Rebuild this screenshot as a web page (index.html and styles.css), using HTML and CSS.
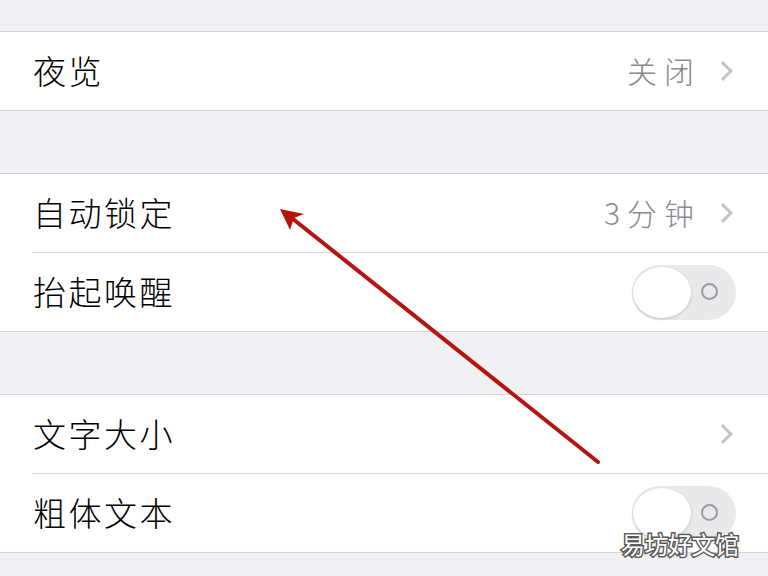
FILE: index.html
```html
<!DOCTYPE html>
<html lang="zh-CN">
<head>
  <meta charset="UTF-8">
  <title>显示与亮度</title>
  <link rel="stylesheet" href="styles.css">
</head>
<body>
  <div class="screen">
    <!-- Night Shift -->
    <div class="group">
      <div class="row">
        <span class="label">夜览</span>
        <span class="value">关闭</span>
        <span class="chevron"></span>
      </div>
    </div>

    <!-- Lock -->
    <div class="group">
      <div class="row">
        <span class="label">自动锁定</span>
        <span class="value">3分钟</span>
        <span class="chevron"></span>
      </div>
      <div class="row">
        <span class="label">抬起唤醒</span>
        <span class="toggle"><span class="knob"></span><span class="off-mark"></span></span>
      </div>
    </div>

    <!-- Text -->
    <div class="group">
      <div class="row">
        <span class="label">文字大小</span>
        <span class="chevron"></span>
      </div>
      <div class="row">
        <span class="label">粗体文本</span>
        <span class="toggle"><span class="knob"></span><span class="off-mark"></span></span>
      </div>
    </div>

    <!-- Annotation arrow -->
    <svg class="arrow" width="768" height="576" viewBox="0 0 768 576">
      <line x1="598" y1="462" x2="288" y2="215" stroke="#b3160e" stroke-width="4" stroke-linecap="round"/>
      <path d="M280 209 L304 214 L294 218 L290 230 Z" fill="#b3160e"/>
    </svg>

    <div class="watermark">易坊好文馆</div>
  </div>
</body>
</html>
```

FILE: styles.css
```css
body {
  margin: 0;
  background-color: #f1f1f5;
  font-family: "Noto Sans CJK SC", "Noto Sans", sans-serif;
}

.screen {
  position: relative;
  width: 768px;
  height: 576px;
  overflow: hidden;
  padding-top: 31px;
  box-sizing: border-box;
}

.group {
  background-color: #ffffff;
  border-top: 1px solid #d4d4d8;
  border-bottom: 1px solid #d4d4d8;
  margin-bottom: 62px;
}

.row {
  display: flex;
  align-items: center;
  height: 78px;
  margin-left: 32px;
  padding-left: 1px;
  padding-right: 34px;
}

.row + .row {
  border-top: 1px solid #d8d8dc;
}

.label {
  flex: 1;
  font-size: 33px;
  font-weight: 300;
  letter-spacing: 2.5px;
  color: #000000;
  margin-top: -2px;
}

.value {
  font-size: 30px;
  font-weight: 300;
  letter-spacing: 7px;
  color: #8a8a8e;
  margin-right: 15px;
  margin-top: -2px;
}

.chevron {
  width: 11px;
  height: 11px;
  border-top: 3px solid #c3c3c7;
  border-right: 3px solid #c3c3c7;
  transform: rotate(45deg);
  margin-right: 4px;
}

/* off-state switch */
.toggle {
  position: relative;
  width: 104px;
  height: 55px;
  border-radius: 28px;
  background-color: #e9e9eb;
  margin-right: -2px;
}

.knob {
  position: absolute;
  left: 1px;
  top: 2px;
  width: 58px;
  height: 51px;
  border-radius: 50%;
  background-color: #ffffff;
  box-shadow: 0 1px 3px rgba(0, 0, 0, 0.18);
}

.off-mark {
  position: absolute;
  left: 69px;
  top: 18px;
  width: 17px;
  height: 17px;
  border: 2px solid #9c9ca0;
  border-radius: 50%;
  box-sizing: border-box;
}

.arrow {
  position: absolute;
  left: 0;
  top: 0;
}

.watermark {
  position: absolute;
  left: 621px;
  top: 526px;
  font-size: 24px;
  color: #ffffff;
  -webkit-text-stroke: 3px #5a5a5a;
  paint-order: stroke fill;
  letter-spacing: -0.5px;
}
```
